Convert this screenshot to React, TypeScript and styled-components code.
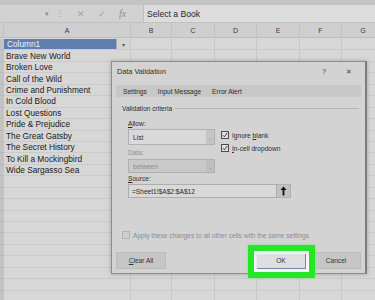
import React from "react";
import styled, { createGlobalStyle } from "styled-components";

const GlobalStyle = createGlobalStyle`
    body {
        margin: 0;
        background: #d6d6d6;
        font-family: "Liberation Sans", Arial, sans-serif;
    }
`;

const Screen = styled.div`
    position: relative;
    width: 375px;
    height: 300px;
    overflow: hidden;
    background: #d7d7d7;
    color: #222;
`;

const TopStrip = styled.div`
    height: 5px;
    background: #c4c4c4;
`;

const FormulaBar = styled.div`
    display: flex;
    align-items: center;
    height: 17px;
    background: #d2d2d2;
    border-bottom: 1px solid #c2c2c2;
`;

const NameBox = styled.div`
    display: flex;
    align-items: center;
    justify-content: flex-end;
    width: 49px;
    padding-right: 3px;
    font-size: 7px;
    color: #8a8a8a;
`;

const BarIcons = styled.div`
    display: flex;
    align-items: center;
    gap: 13px;
    width: 88px;
    padding-left: 3px;
    font-size: 9px;
    color: #a2a2a2;

    .fx {
        font-family: "Liberation Serif", serif;
        font-style: italic;
        font-size: 10px;
        color: #8d8d8d;
    }
`;

const FormulaInput = styled.div`
    flex: 1;
    height: 100%;
    display: flex;
    align-items: center;
    padding-left: 3px;
    border-left: 1px solid #bdbdbd;
    background: #dcdcdc;
    font-size: 8.6px;
    color: #2a2a2a;
`;

const COLS = "4px 127px 41px 43px 42px 43px 42px 43px";

const HeaderRow = styled.div`
    display: grid;
    grid-template-columns: ${COLS};
    height: 14px;
    background: #cfcfcf;
    border-bottom: 1px solid #bdbdbd;
`;

const HeaderCell = styled.div`
    display: flex;
    align-items: center;
    justify-content: center;
    font-size: 7px;
    color: #3a3a3a;
    border-right: 1px solid #c2c2c2;
`;

const Sheet = styled.div`
    display: grid;
    grid-template-columns: ${COLS};
    grid-auto-rows: 11.45px;
    margin-top: 1px;
`;

const RowHead = styled.div`
    background: #c3c3c3;
    border-bottom: 1px solid #b8b8b8;
`;

const Cell = styled.div<{ $head?: boolean }>`
    display: flex;
    align-items: center;
    justify-content: space-between;
    padding-left: ${(p) => (p.$head ? "3px" : "2px")};
    font-size: 8.3px;
    white-space: nowrap;
    color: ${(p) => (p.$head ? "#f2f2f2" : "#1a1a1a")};
    background: ${(p) => (p.$head ? "#5f7eb2" : "transparent")};
    border-right: 1px solid #c6c6c6;
    border-bottom: 1px solid #cbcbcb;
`;

const FilterButton = styled.span`
    display: flex;
    align-items: center;
    justify-content: center;
    width: 13px;
    height: 100%;
    background: #d4d4d4;
    border-left: 1px solid #a8a8a8;
    font-size: 6px;
    color: #555;
`;

const Dialog = styled.div`
    position: absolute;
    left: 111px;
    top: 61px;
    width: 253px;
    height: 211px;
    display: flex;
    flex-direction: column;
    background: #d3d3d3;
    border: 1px solid #8d8d8d;
    border-right: 2px solid #7d7d7d;
    box-shadow: 0 0 4px rgba(0, 0, 0, 0.25);
    font-size: 6.6px;
    color: #2c2c2c;
`;

const TitleBar = styled.div`
    display: flex;
    align-items: center;
    justify-content: space-between;
    height: 18px;
    padding: 0 13px 0 5px;
    font-size: 7.3px;

    .actions {
        display: flex;
        gap: 20px;
        color: #444;
    }
`;

const Tabs = styled.div`
    display: flex;
    align-items: center;
    gap: 11px;
    height: 12px;
    margin: 5px 4px 0 4px;
    padding-left: 7px;
    background: #c7c7c7;
`;

const Body = styled.div`
    display: flex;
    flex-direction: column;
    padding: 6px 6px 0 10px;
`;

const Legend = styled.div`
    display: flex;
    align-items: center;
    gap: 3px;
    height: 10px;

    &::after {
        content: "";
        flex: 1;
        height: 1px;
        background: #b7b7b7;
    }
`;

const Fields = styled.div`
    display: grid;
    grid-template-columns: 87px 1fr;
    column-gap: 6px;
    padding-left: 6px;
    margin-top: 5px;
`;

const FieldColumn = styled.div`
    display: flex;
    flex-direction: column;
`;

const Label = styled.div<{ $muted?: boolean }>`
    display: flex;
    align-items: center;
    height: 10px;
    color: ${(p) => (p.$muted ? "#8f8f8f" : "#2c2c2c")};
`;

const Select = styled.div<{ $disabled?: boolean }>`
    display: flex;
    align-items: stretch;
    height: ${(p) => (p.$disabled ? "12px" : "14px")};
    margin: ${(p) => (p.$disabled ? "2px 0 0 0" : "1px 0 2px 0")};
    border: 1px solid #b0b0b0;
    background: ${(p) => (p.$disabled ? "#c9c9c9" : "#d9d9d9")};
    color: ${(p) => (p.$disabled ? "#8e8e8e" : "#2c2c2c")};

    .value {
        flex: 1;
        display: flex;
        align-items: center;
        padding-left: 4px;
    }
    .arrow {
        width: 8px;
        display: flex;
        align-items: center;
        justify-content: center;
        background: ${(p) => (p.$disabled ? "#bfbfbf" : "#c5c5c5")};
        color: #999;
        font-size: 6px;
    }
`;

const Checks = styled.div`
    display: flex;
    flex-direction: column;
    gap: 5px;
    padding-top: 13px;
`;

const CheckRow = styled.label<{ $faded?: boolean }>`
    display: flex;
    align-items: center;
    gap: 3px;
    height: 8px;
    color: ${(p) => (p.$faded ? "#8c8c8c" : "#2c2c2c")};
`;

const Box = styled.span<{ $faded?: boolean }>`
    display: flex;
    width: 6px;
    height: 6px;
    border: 1px solid ${(p) => (p.$faded ? "#b3b3b3" : "#4d4d4d")};
    background: ${(p) => (p.$faded ? "#cdcdcd" : "#e0e0e0")};
    svg {
        width: 6px;
        height: 6px;
    }
`;

const SourceArea = styled.div`
    display: flex;
    flex-direction: column;
    padding-left: 6px;
`;

const SourceRow = styled.div`
    display: flex;
    height: 14px;
    margin-top: 1px;
    width: 163px;
`;

const SourceInput = styled.div`
    flex: 1;
    display: flex;
    align-items: center;
    padding-left: 3px;
    border: 1px solid #adadad;
    background: #d9d9d9;
    color: #2a2a2a;
`;

const RefButton = styled.div`
    width: 13px;
    display: flex;
    align-items: center;
    justify-content: center;
    background: #c2c2c2;
    border: 1px solid #b0b0b0;
    border-left: none;
`;

const ApplyRow = styled.div`
    margin-top: 33px;
`;

const Footer = styled.div`
    display: flex;
    align-items: center;
    margin-top: 13px;
    padding: 0 4px;
    gap: 5px;
`;

const Button = styled.div<{ $primary?: boolean }>`
    display: flex;
    align-items: center;
    justify-content: center;
    width: 48px;
    height: 15px;
    background: ${(p) => (p.$primary ? "#dedede" : "#c6c6c6")};
    border: 1px solid ${(p) => (p.$primary ? "#6d86b3" : "#bcbcbc")};
    color: #333;

    &.spacer {
        margin-left: auto;
    }
`;

const Highlight = styled.div`
    position: absolute;
    left: 248px;
    top: 245px;
    width: 67px;
    height: 33px;
    box-sizing: border-box;
    border: 6px solid #27e527;
    border-radius: 1px;
    box-shadow: 0 0 3px #6cf06c, inset 0 0 0 3px rgba(250, 250, 250, 0.85);
`;

const books = [
    "Brave New World",
    "Broken Love",
    "Call of the Wild",
    "Crime and Punishment",
    "In Cold Blood",
    "Lost Questions",
    "Pride & Prejudice",
    "The Great Gatsby",
    "The Secret History",
    "To Kill a Mockingbird",
    "Wide Sargasso Sea",
];

const letters = ["A", "B", "C", "D", "E", "F", "G"];

const Check = () => (
    <svg viewBox="0 0 6 6">
        <path d="M0.8 3.2 L2.4 4.8 L5.3 0.9" fill="none" stroke="#2a2a2a" strokeWidth="0.9" />
    </svg>
);

const App = () => {
    const rows: string[] = [...books];
    while (rows.length < 23) rows.push("");

    return (
        <Screen>
            <GlobalStyle />
            <TopStrip />
            <FormulaBar>
                <NameBox>▾</NameBox>
                <BarIcons>
                    <span>⋮</span>
                    <span>✕</span>
                    <span>✓</span>
                    <span className="fx">fx</span>
                </BarIcons>
                <FormulaInput>Select a Book</FormulaInput>
            </FormulaBar>
            <HeaderRow>
                <HeaderCell />
                {letters.map((l) => (
                    <HeaderCell key={l}>{l}</HeaderCell>
                ))}
            </HeaderRow>
            <Sheet>
                <RowHead />
                <Cell $head>
                    Column1
                    <FilterButton>▾</FilterButton>
                </Cell>
                {letters.slice(1).map((l) => (
                    <Cell key={"h" + l} />
                ))}
                {rows.map((name, i) => (
                    <React.Fragment key={i}>
                        <RowHead />
                        <Cell>{name}</Cell>
                        {letters.slice(1).map((l) => (
                            <Cell key={l} />
                        ))}
                    </React.Fragment>
                ))}
            </Sheet>

            <Dialog>
                <TitleBar>
                    <span>Data Validation</span>
                    <span className="actions">
                        <span>?</span>
                        <span>✕</span>
                    </span>
                </TitleBar>
                <Tabs>
                    <span>Settings</span>
                    <span>Input Message</span>
                    <span>Error Alert</span>
                </Tabs>
                <Body>
                    <Legend>Validation criteria</Legend>
                    <Fields>
                        <FieldColumn>
                            <Label>
                                <u>A</u>llow:
                            </Label>
                            <Select>
                                <span className="value">List</span>
                                <span className="arrow">⌄</span>
                            </Select>
                            <Label $muted>Data:</Label>
                            <Select $disabled>
                                <span className="value">between</span>
                                <span className="arrow">⌄</span>
                            </Select>
                        </FieldColumn>
                        <Checks>
                            <CheckRow>
                                <Box>
                                    <Check />
                                </Box>
                                <span>
                                    Ignore <u>b</u>lank
                                </span>
                            </CheckRow>
                            <CheckRow>
                                <Box>
                                    <Check />
                                </Box>
                                <span>
                                    <u>I</u>n-cell dropdown
                                </span>
                            </CheckRow>
                        </Checks>
                    </Fields>
                    <SourceArea>
                        <Label>
                            <u>S</u>ource:
                        </Label>
                        <SourceRow>
                            <SourceInput>=Sheet1!$A$2:$A$12</SourceInput>
                            <RefButton>
                                <svg width="7" height="10" viewBox="0 0 7 10">
                                    <path d="M3.5 0.5 L0.5 4 H2.6 V9.5 H4.4 V4 H6.5 Z" fill="#111" />
                                </svg>
                            </RefButton>
                        </SourceRow>
                    </SourceArea>
                    <ApplyRow>
                        <CheckRow $faded>
                            <Box $faded />
                            <span>Apply these changes to all other cells with the same settings</span>
                        </CheckRow>
                    </ApplyRow>
                </Body>
                <Footer>
                    <Button>
                        <span>
                            <u>C</u>lear All
                        </span>
                    </Button>
                    <Button $primary className="spacer">
                        OK
                    </Button>
                    <Button>Cancel</Button>
                </Footer>
            </Dialog>
            <Highlight />
        </Screen>
    );
};

export default App;
